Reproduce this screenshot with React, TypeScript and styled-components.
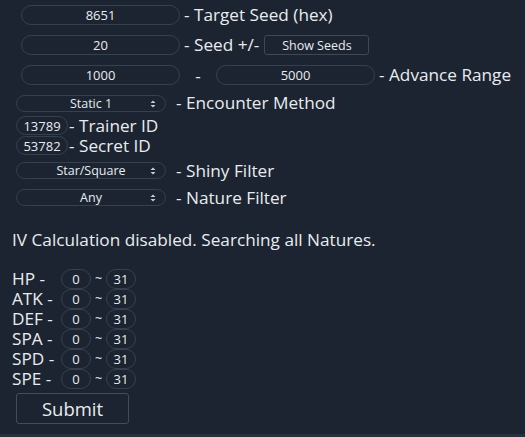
import React from "react";
import styled, { createGlobalStyle } from "styled-components";

const Global = createGlobalStyle`
  html, body { margin: 0; padding: 0; background: #27313d; }
  body { font-family: "Open Sans", "Noto Sans", sans-serif; color: #e9ecef; }
  * { box-sizing: border-box; }
`;

const Page = styled.div`
  width: 525px;
  height: 434px;
  background: #1b2430;
  padding: 5px 0 0 12px;
  display: flex;
  flex-direction: column;
`;

const Row = styled.div<{ $mt?: number; $h?: number }>`
  display: flex;
  align-items: center;
  margin-top: ${(p) => p.$mt ?? 0}px;
  height: ${(p) => p.$h ?? 20}px;
`;

const Label = styled.span<{ $ml?: number }>`
  font-size: 17.2px;
  margin-left: ${(p) => p.$ml ?? 4}px;
  white-space: nowrap;
  line-height: 1;
`;

const Field = styled.input<{ $w: number; $h?: number; $ml?: number; $fs?: number }>`
  width: ${(p) => p.$w}px;
  height: ${(p) => p.$h ?? 20}px;
  margin-left: ${(p) => p.$ml ?? 0}px;
  border: 1px solid #364150;
  border-radius: 11px;
  background: transparent;
  color: #e9ecef;
  text-align: center;
  font-family: "Open Sans", sans-serif;
  font-size: ${(p) => p.$fs ?? 13}px;
  line-height: 1;
  padding: 0;
  outline: none;
`;

const SelectWrap = styled.div<{ $ml?: number }>`
  position: relative;
  margin-left: ${(p) => p.$ml ?? 4}px;
  width: 150px;
  height: 17px;
  flex: none;
`;

const Select = styled.select`
  appearance: none;
  display: block;
  width: 100%;
  height: 17px;
  border: 1px solid #364150;
  border-radius: 9px;
  background: transparent;
  color: #e9ecef;
  font-family: "Open Sans", sans-serif;
  font-size: 12.5px;
  line-height: 15px;
  text-align: center;
  text-align-last: center;
  padding: 0;
  outline: none;
`;

const Arrows = styled.svg`
  position: absolute;
  right: 10px;
  top: 5px;
  pointer-events: none;
`;

const SmallButton = styled.button<{ $ml?: number }>`
  margin-left: ${(p) => p.$ml ?? 0}px;
  width: 105px;
  height: 20px;
  border: 1px solid #3e4856;
  border-radius: 3px;
  background: transparent;
  color: #e9ecef;
  font-family: "Open Sans", sans-serif;
  font-size: 12.5px;
  padding: 0;
`;

const Dash = styled.span`
  width: 36px;
  text-align: center;
  font-size: 17.2px;
`;

const Info = styled.div`
  margin-top: 24px;
  font-size: 17.2px;
  line-height: 20px;
  white-space: nowrap;
`;

const IvList = styled.div`
  margin-top: 19px;
  display: flex;
  flex-direction: column;
`;

const IvRow = styled.div`
  display: grid;
  grid-template-columns: 49px 30px 15px 30px;
  align-items: center;
  height: 20px;
`;

const IvLabel = styled.span`
  font-size: 17.2px;
  line-height: 1;
  white-space: nowrap;
`;

const Tilde = styled.span`
  font-size: 12.5px;
  line-height: 1;
  text-align: center;
`;

const Submit = styled.button`
  margin: 4px 0 0 4px;
  width: 113px;
  height: 31px;
  border: 1px solid #434d5a;
  border-radius: 3px;
  background: transparent;
  color: #e9ecef;
  font-family: "Open Sans", sans-serif;
  font-size: 18.5px;
  padding: 0;
`;

const SelectBox = ({ value, ml }: { value: string; ml?: number }) => (
  <SelectWrap $ml={ml}>
    <Select defaultValue={value}>
      <option>{value}</option>
    </Select>
    <Arrows width="6" height="8" viewBox="0 0 6 8">
      <path d="M0.5 3 L3 0.5 L5.5 3 Z" fill="#c9ced4" />
      <path d="M0.5 5 L3 7.5 L5.5 5 Z" fill="#c9ced4" />
    </Arrows>
  </SelectWrap>
);

const ivs = ["HP -", "ATK -", "DEF -", "SPA -", "SPD -", "SPE -"];

export default function App() {
  return (
    <>
      <Global />
      <Page>
        <Row>
          <Field $w={159} $ml={9} defaultValue="8651" />
          <Label>- Target Seed (hex)</Label>
        </Row>
        <Row $mt={10}>
          <Field $w={159} $ml={9} defaultValue="20" />
          <Label>- Seed +/-</Label>
          <SmallButton $ml={5}>Show Seeds</SmallButton>
        </Row>
        <Row $mt={10}>
          <Field $w={159} $ml={9} defaultValue="1000" />
          <Dash>-</Dash>
          <Field $w={159} defaultValue="5000" />
          <Label>- Advance Range</Label>
        </Row>
        <Row $mt={9} $h={18}>
          <SelectBox value="Static 1" />
          <Label $ml={10}>- Encounter Method</Label>
        </Row>
        <Row $mt={4} $h={19}>
          <Field $w={52} $h={19} $ml={4} $fs={13} defaultValue="13789" />
          <Label $ml={1}>- Trainer ID</Label>
        </Row>
        <Row $mt={1} $h={19}>
          <Field $w={52} $h={19} $ml={4} $fs={13} defaultValue="53782" />
          <Label $ml={1}>- Secret ID</Label>
        </Row>
        <Row $mt={7} $h={17}>
          <SelectBox value="Star/Square" />
          <Label $ml={10}>- Shiny Filter</Label>
        </Row>
        <Row $mt={10} $h={17}>
          <SelectBox value="Any" />
          <Label $ml={10}>- Nature Filter</Label>
        </Row>
        <Info>IV Calculation disabled. Searching all Natures.</Info>
        <IvList>
          {ivs.map((l) => (
            <IvRow key={l}>
              <IvLabel>{l}</IvLabel>
              <Field $w={30} $h={20} $fs={13} defaultValue="0" />
              <Tilde>~</Tilde>
              <Field $w={30} $h={20} $fs={13} defaultValue="31" />
            </IvRow>
          ))}
        </IvList>
        <Submit>Submit</Submit>
      </Page>
    </>
  );
}
